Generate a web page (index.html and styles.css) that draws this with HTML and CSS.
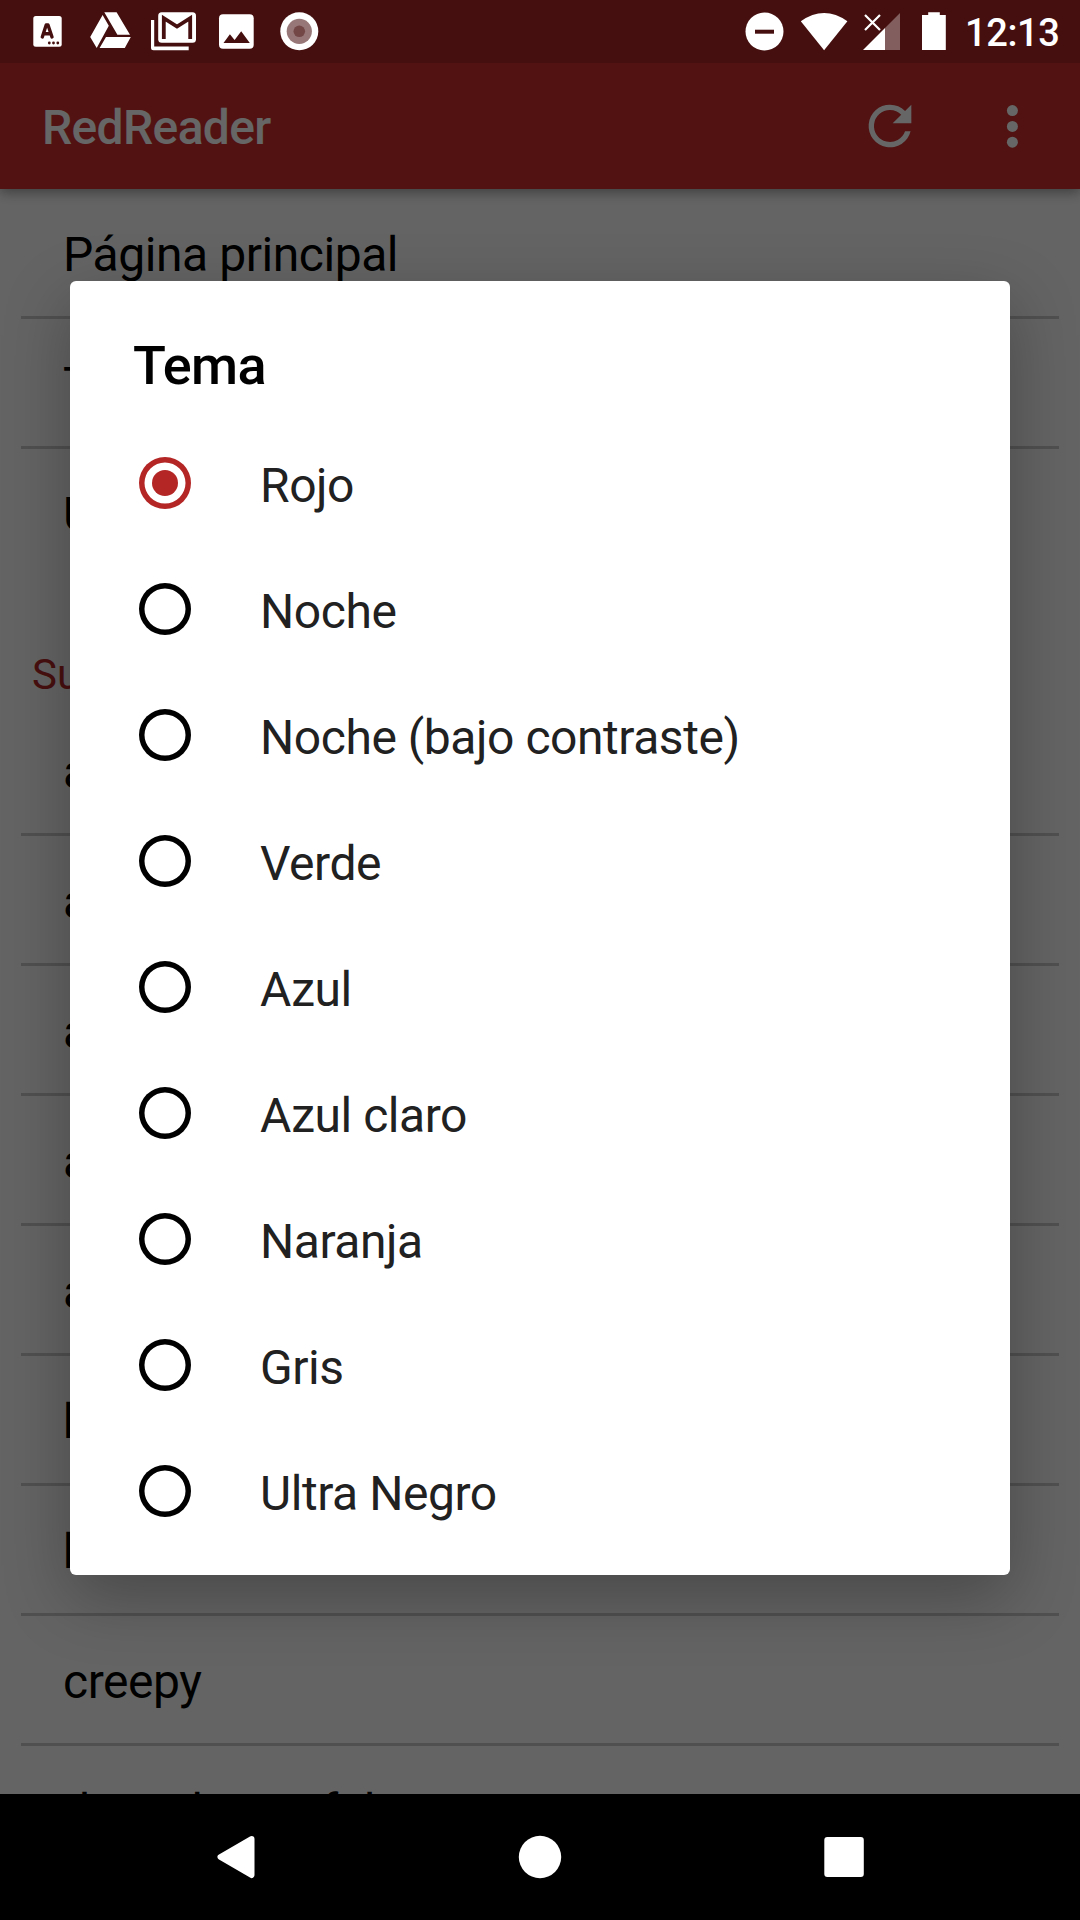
FILE: index.html
```html
<!DOCTYPE html>
<html lang="es">
<head>
<meta charset="utf-8">
<title>RedReader</title>
<link rel="stylesheet" href="styles.css">
</head>
<body>
<div class="screen">
  <header class="status">
    <div class="status-left">
      <svg width="63" height="63" viewBox="16 0 63 63"><rect x="33.3" y="16" width="28.4" height="30.7" rx="2.5" fill="#fff"/><path d="M42.3 37 46.2 25h1.8L52 37M43.5 33.8h7.3" fill="none" stroke="#450f0f" stroke-width="3.4" stroke-linecap="round" stroke-linejoin="round"/><g fill="#450f0f"><circle cx="49.3" cy="43" r="1.4"/><circle cx="53.5" cy="43" r="1.4"/><circle cx="57.8" cy="43" r="1.4"/></g></svg>
      <svg width="63" height="63" viewBox="79 0 63 63" fill="#fff"><path d="M104.3 12.3h12.3L130 34.8h-12.6zM102.6 15l6.2 10.8L96.7 48l-6.5-11zM106 37h24.8l-6 11H99.6z"/></svg>
      <svg width="63" height="63" viewBox="142 0 63 63"><rect x="158.2" y="12.3" width="37.8" height="30.4" rx="3.5" fill="#fff"/><path d="M151 20h3.2v26.5h34.5v3.8H153.5a2.5 2.5 0 0 1-2.5-2.5z" fill="#fff"/><path d="M163.8 39V18.2l13.2 8.3 13.2-8.3V39" fill="none" stroke="#450f0f" stroke-width="3.8"/></svg>
      <svg width="63" height="63" viewBox="205 0 63 63"><rect x="219" y="14.3" width="34.7" height="34.4" rx="4" fill="#fff"/><path d="M223.5 43l6.4-8.7 4.7 5.7 6.6-8.7 8.6 11.7z" fill="#450f0f"/></svg>
      <svg width="63" height="63" viewBox="268 0 63 63"><circle cx="299.3" cy="31.3" r="19" fill="#fff"/><circle cx="299.3" cy="31.3" r="12.6" fill="#987778"/><circle cx="299.3" cy="31.3" r="5.8" fill="#744747"/></svg>
    </div>
    <div class="status-right">
      <svg width="54" height="63" viewBox="740 0 54 63"><circle cx="764.5" cy="31.5" r="19" fill="#fff"/><path d="M755 31.7h19" stroke="#450f0f" stroke-width="4"/></svg>
      <svg width="62" height="63" viewBox="794 0 62 63"><path d="M800.8 21.2q23.3-16.4 46.6 0L824.1 50.2z" fill="#fff"/></svg>
      <svg width="56" height="63" viewBox="856 0 56 63"><path d="M900 13v37H885V28z" fill="#fff" opacity=".33"/><path d="M885 28v22H863z" fill="#fff"/><path d="M865 15l15 15M880 15l-15 15" stroke="#fff" stroke-width="2.2"/></svg>
      <svg width="50" height="63" viewBox="912 0 50 63"><path d="M928.2 12.2h11.6v2.8h6v35H922V15h6.2z" fill="#fff"/></svg>
      <span class="clock">12:13</span>
    </div>
  </header>

  <div class="app">
    <div class="appbar">
      <h1 class="app-title">RedReader</h1>
      <svg width="64" height="64" viewBox="0 0 24 24" class="refresh"><path fill="#fff" d="M17.65 6.35A7.96 7.96 0 0 0 12 4a8 8 0 1 0 7.73 10h-2.08A6 6 0 1 1 12 6c1.66 0 3.14.69 4.22 1.78L13 11h7V4z"/></svg>
      <svg width="24" height="64" viewBox="0 0 24 64" class="more" fill="#fff"><circle cx="12.4" cy="16.6" r="5.5"/><circle cx="12.4" cy="32.4" r="5.5"/><circle cx="12.4" cy="48.2" r="5.5"/></svg>
    </div>
    <div class="list">
      <div class="item">Página principal</div>
      <div class="item">Todos</div>
      <div class="item last">Usuario</div>
      <div class="section">Subreddits</div>
      <div class="item">announcements</div>
      <div class="item">art</div>
      <div class="item">askreddit</div>
      <div class="item">askscience</div>
      <div class="item">aww</div>
      <div class="item">blog</div>
      <div class="item">books</div>
      <div class="item">creepy</div>
      <div class="item">dataisbeautiful</div>
    </div>
    <div class="scrim">
      <div class="dialog">
        <h2 class="dialog-title">Tema</h2>
        <div class="option"><span class="radio checked"></span><span class="label">Rojo</span></div>
        <div class="option"><span class="radio"></span><span class="label">Noche</span></div>
        <div class="option"><span class="radio"></span><span class="label">Noche (bajo contraste)</span></div>
        <div class="option"><span class="radio"></span><span class="label">Verde</span></div>
        <div class="option"><span class="radio"></span><span class="label">Azul</span></div>
        <div class="option"><span class="radio"></span><span class="label">Azul claro</span></div>
        <div class="option"><span class="radio"></span><span class="label">Naranja</span></div>
        <div class="option"><span class="radio"></span><span class="label">Gris</span></div>
        <div class="option"><span class="radio"></span><span class="label">Ultra Negro</span></div>
      </div>
    </div>
  </div>

  <nav class="navbar">
    <svg width="304" height="126" viewBox="84 0 304 126"><path d="M251.5 45 220.500 63l31 18z" fill="#fff" stroke="#fff" stroke-width="6" stroke-linejoin="round"/></svg>
    <svg width="304" height="126" viewBox="388 0 304 126"><circle cx="540" cy="63" r="21.200" fill="#fff"/></svg>
    <svg width="304" height="126" viewBox="692 0 304 126"><rect x="824.300" y="43" width="39.500" height="40" rx="3" fill="#fff"/></svg>
  </nav>
</div>
</body>
</html>
```
FILE: styles.css
```css
* { box-sizing: border-box; margin: 0; padding: 0; }

body {
  width: 1080px;
  height: 1920px;
  overflow: hidden;
  background: #000;
  font-family: Roboto, "Noto Sans", sans-serif;
}

svg { display: block; flex: none; }

.screen {
  display: grid;
  grid-template-rows: 63px 1731px 126px;
  height: 1920px;
}

.status {
  display: flex;
  justify-content: space-between;
  background: #450f0f;
  color: #fff;
}
.status-left { display: flex; padding-left: 16px; }
.status-right { display: flex; width: 340px; }
.clock {
  padding: 2px 0 0 3px;
  font-size: 38px;
  font-weight: 500;
  letter-spacing: -.4px;
  line-height: 63px;
}

.app {
  position: relative;
  display: flex;
  flex-direction: column;
  overflow: hidden;
  background: #fafafa;
}

.appbar {
  flex: none;
  display: flex;
  align-items: center;
  height: 126px;
  padding: 0 56px 0 42px;
  background: #cc2e2e;
  box-shadow: 0 3px 12px rgba(0, 0, 0, .4);
}
.app-title {
  flex: 1;
  padding-top: 2px;
  color: #fff;
  font-size: 48px;
  font-weight: 500;
  letter-spacing: -.65px;
}
.refresh { margin-right: 78px; }

.list { padding: 0 21px; }
.item {
  height: 130px;
  padding: 2px 0 0 42px;
  border-bottom: 3px solid #c8c8c8;
  color: #000;
  font-size: 48px;
  letter-spacing: -.45px;
  line-height: 127px;
  white-space: nowrap;
}
.item.last { height: 127px; border-bottom: 0; }
.section {
  height: 130px;
  padding: 67px 0 0 11px;
  color: #b42626;
  font-size: 42px;
  line-height: 63px;
}

/* Dims the app behind the open dialog. */
.scrim {
  position: absolute;
  inset: 0;
  display: flex;
  justify-content: center;
  align-items: flex-start;
  padding-top: 218px;
  background: rgba(0, 0, 0, .6);
}

.dialog {
  width: 940px;
  height: 1294px;
  border-radius: 6px;
  background: #fff;
  box-shadow: 0 22px 66px rgba(0, 0, 0, .28);
}
.dialog-title {
  height: 139px;
  padding: 53px 0 0 63px;
  color: #000;
  font-size: 54px;
  font-weight: 500;
  letter-spacing: -.65px;
  line-height: 64px;
}
.option {
  display: flex;
  align-items: center;
  gap: 68px;
  height: 126px;
  padding-left: 69px;
}
.radio {
  display: flex;
  align-items: center;
  justify-content: center;
  width: 52px;
  height: 52px;
  border-radius: 50%;
  box-shadow: inset 0 0 0 5.500px #000;
}
.radio.checked { box-shadow: inset 0 0 0 5.500px #b42626; }
.radio.checked::before {
  content: "";
  width: 26px;
  height: 26px;
  border-radius: 50%;
  background: #b42626;
}
.label {
  padding: 4px 0 0 1px;
  color: #212121;
  font-size: 48px;
  letter-spacing: -.45px;
}

.navbar {
  display: flex;
  justify-content: center;
  background: #000;
}
```
